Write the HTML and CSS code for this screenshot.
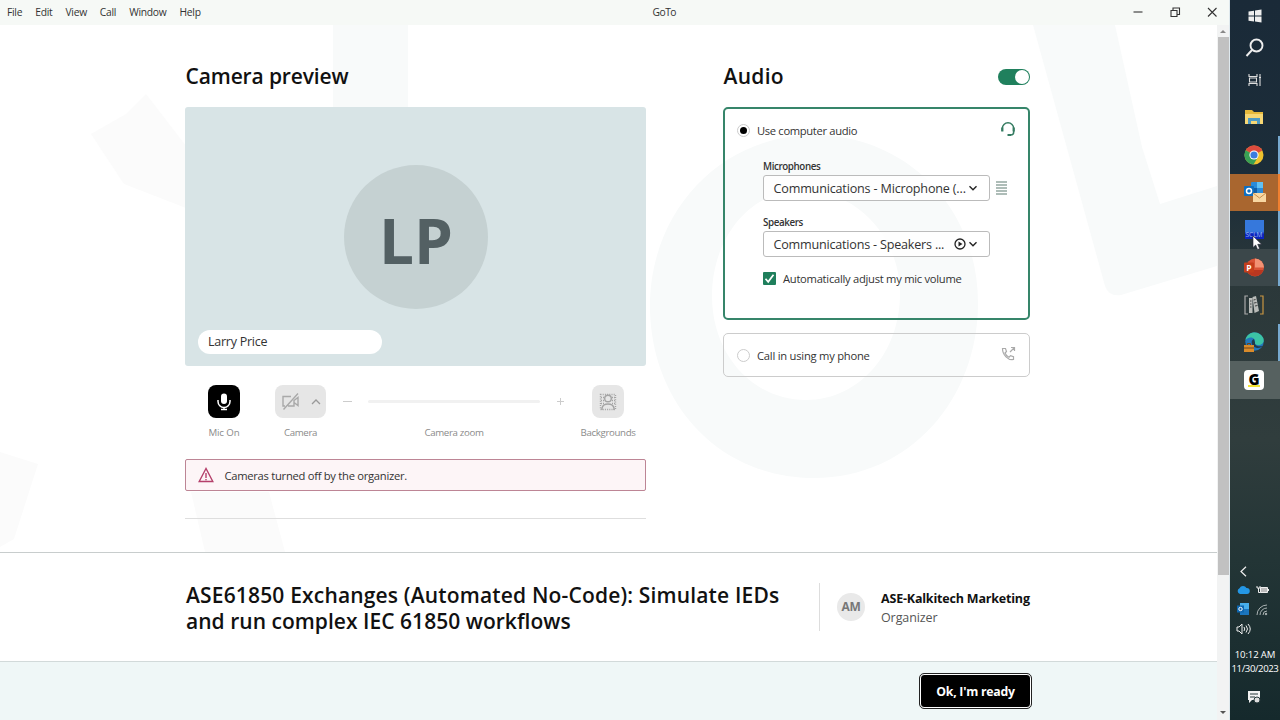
FILE: index.html
```html
<!DOCTYPE html>
<html lang="en">
  <head>
    <meta charset="UTF-8" />
    <meta name="viewport" content="width=device-width, initial-scale=1.0" />
    <title>GoTo</title>
    <link rel="stylesheet" href="styles.css">
  </head>
  <body>
    <div class="window">
      <header class="titlebar">
        <nav class="menu">
          <span>File</span>
          <span>Edit</span>
          <span>View</span>
          <span>Call</span>
          <span>Window</span>
          <span>Help</span>
        </nav>
        <span class="app-name">GoTo</span>
        <div class="controls">
          <svg width="12" height="12" viewBox="0 0 12 12"><path d="M1.500 6h9" /></svg>
          <svg width="12" height="12" viewBox="0 0 12 12"><path d="M2 4.500h6v6H2zM4 4.500v-2.500h6.500v6.500H8" /></svg>
          <svg width="12" height="12" viewBox="0 0 12 12"><path d="M2 2l8.500 8.500M10.500 2L2 10.500" /></svg>
        </div>
      </header>

      <div class="body">
        <div class="page">
          <main class="setup">
            <svg class="watermark" width="1217" height="527" viewBox="0 25 1217 527">
              <path d="M333 25h75v82h-75z" />
              <path fill-rule="evenodd" d="M814 135c92 0 164 72 164 168s-68 175-164 175-164-76-164-172 72-171 164-171zM802 190c-52 0-90 48-90 106s40 104 94 104 94-48 94-106-44-104-98-104z" />
              <path d="M1033 25h82l27 122 18 57 57-18v80l-96 29q-12 2-16-9z" />
              <path class="faint" d="M91 134l35-20 20-20 40 52v62l-62-24z" />
              <path class="faint" d="M0 452l38 12-24 75-14 8zM191 492h78l16 60h-80z" />
            </svg>

            <section class="camera">
              <h2>Camera preview</h2>
              <div class="preview">
                <div class="avatar">LP</div>
                <div class="name-tag">Larry Price</div>
              </div>
              <div class="tools">
                <div class="tool tool-mic">
                  <button class="tool-btn dark">
                    <svg width="20" height="20" viewBox="0 0 20 20"><rect x="7" y="1.500" width="6" height="10.500" rx="3" fill="#fff" /><path d="M4 8v1.500a6 6 0 0 0 12 0V8M10 15.500v2M7 17.500h6" fill="none" stroke="#fff" stroke-width="1.500" /></svg>
                  </button>
                  <span>Mic On</span>
                </div>
                <div class="tool tool-camera">
                  <button class="tool-btn wide">
                    <svg width="19" height="19" viewBox="0 0 19 19" fill="none" stroke="#a9a9a9" stroke-width="1.400"><path d="M10 4.500H2v9.500h2M13 8v6H7M13 8.500l4-3v8l-4-3M2.500 17.500L17 1.500" /></svg>
                    <svg width="10" height="10" viewBox="0 0 10 10" fill="none" stroke="#999" stroke-width="1.300"><path d="M1 7L5 3l4 4" /></svg>
                  </button>
                  <span>Camera</span>
                </div>
                <div class="tool tool-zoom">
                  <div class="slider">
                    <svg width="9" height="9" viewBox="0 0 9 9" stroke="#ccc"><path d="M0 4.500h9" /></svg>
                    <div class="track"></div>
                    <svg width="9" height="9" viewBox="0 0 9 9" stroke="#ccc"><path d="M1 4.500h7M4.500 1v7" /></svg>
                  </div>
                  <span>Camera zoom</span>
                </div>
                <div class="tool tool-backgrounds">
                  <button class="tool-btn">
                    <svg width="18" height="18" viewBox="0 0 18 18" fill="none" stroke="#a4a4a4" stroke-width="1.400"><path d="M1.500 1.500h15v15h-15z" stroke-dasharray="1 1.200" /><path d="M2 4.500h3M2 7.500h3M2 10.500h3M13 4.500h3M13 7.500h3M13 10.500h3" stroke-dasharray="1 1" /><circle cx="9" cy="5.500" r="3.300" /><path d="M3 17v-2q1-4 6-4t6 4v2" /></svg>
                  </button>
                  <span>Backgrounds</span>
                </div>
              </div>
              <div class="alert">
                <svg width="16" height="16" viewBox="0 0 16 16" fill="none" stroke="#b5406b" stroke-width="1.400"><path d="M8 1.500L1.200 14.500h13.600zM8 6v5M8 12v1.200" /></svg>
                <span>Cameras turned off by the organizer.</span>
              </div>
              <hr />
            </section>

            <section class="audio">
              <div class="audio-head">
                <h2>Audio</h2>
                <div class="toggle"></div>
              </div>
              <div class="option selected">
                <div class="option-head">
                  <i class="radio checked"></i>
                  <span>Use computer audio</span>
                  <svg width="16" height="16" viewBox="0 0 16 16" fill="none" stroke="#367c62" stroke-width="1.500"><path d="M2.300 10V7.500a5.700 5.700 0 0 1 11.400 0V11q0 3-3 3" /><path d="M2.300 6.500v4M13.700 6.500v4" stroke-width="2.200" /><path d="M7.500 14h3.500" stroke-width="2" /></svg>
                </div>
                <div class="devices">
                  <label>Microphones</label>
                  <div class="device-row">
                    <div class="select">
                      <span class="mic-device">Communications - Microphone (...</span>
                      <svg width="10" height="10" viewBox="0 0 10 10" fill="none" stroke="#222" stroke-width="1.400"><path d="M1.500 3.300L5 6.700l3.500-3.400" /></svg>
                    </div>
                    <div class="level"></div>
                  </div>
                  <label>Speakers</label>
                  <div class="device-row">
                    <div class="select">
                      <span class="speaker-device">Communications - Speakers ...</span>
                      <svg class="play" width="12" height="12" viewBox="0 0 12 12"><circle cx="6" cy="6" r="5" fill="none" stroke="#222" stroke-width="1.300" /><path d="M4.500 3.500L8.500 6l-4 2.500z" fill="#222" /></svg>
                      <svg width="10" height="10" viewBox="0 0 10 10" fill="none" stroke="#222" stroke-width="1.400"><path d="M1.500 3.300L5 6.700l3.500-3.400" /></svg>
                    </div>
                  </div>
                  <div class="check-row">
                    <svg width="13" height="13" viewBox="0 0 13 13"><rect width="13" height="13" rx="1" fill="#1f7f5c" /><path d="M2.500 6.800l2.700 3 5.300-7" fill="none" stroke="#fff" stroke-width="1.700" /></svg>
                    <span>Automatically adjust my mic volume</span>
                  </div>
                </div>
              </div>
              <div class="option">
                <div class="option-head">
                  <i class="radio"></i>
                  <span class="phone-label">Call in using my phone</span>
                  <svg width="15" height="15" viewBox="0 0 15 15" fill="none" stroke="#aaa" stroke-width="1.200"><path d="M1.500 2.500h3l1 3-1.500 1.500q1.200 3 4 4.200l1.500-1.500 3 1v2.800q-4 .8-7.500-2.700T1.500 2.500zM9 6l4.500-4.500M10 1.500h3.500V5" /></svg>
                </div>
              </div>
            </section>
          </main>

          <section class="meeting">
            <h1>ASE61850 Exchanges (Automated No-Code): Simulate IEDs<br><span>and run complex IEC 61850 workflows</span></h1>
            <div class="organizer">
              <div class="initials">AM</div>
              <div class="organizer-name">
                <b>ASE-Kalkitech Marketing</b>
                <p>Organizer</p>
              </div>
            </div>
          </section>

          <footer class="footer">
            <button class="ready">Ok, I'm ready</button>
          </footer>
        </div>

        <div class="scrollbar">
          <i class="arrow up"></i>
          <div class="thumb"></div>
          <i class="arrow down"></i>
        </div>
      </div>
    </div>

    <aside class="taskbar">
      <div class="sys">
        <svg width="14" height="14" viewBox="0 0 14 14" fill="#eee"><path d="M.5 2.500L6 1.700v4.900H.5zM7 1.500l6.500-1v6.100H7zM.5 7.500H6v5L.5 11.700zM7 7.500h6.500v6L7 12.600z" /></svg>
      </div>
      <div class="sys">
        <svg width="20" height="20" viewBox="0 0 20 20" fill="none" stroke="#eee" stroke-width="1.900"><circle cx="11.500" cy="7.500" r="6" /><path d="M7 12l-5.500 6" /></svg>
      </div>
      <div class="sys">
        <svg width="14" height="14" viewBox="0 0 14 14" fill="none" stroke="#ddd" stroke-width="1.100"><path d="M1 1v2.500h8V1M1 13v-2.500h8V13M1.500 5h7v4h-7zM12 1v12M11 4.500h2" /></svg>
      </div>
      <div class="task">
        <svg width="20" height="18" viewBox="0 0 20 18"><path d="M1 2h7l2 2h9v12H1z" fill="#e6b93c" /><path d="M1 6h18v10H1z" fill="#f7d774" /><path d="M4 10h12v6h-3v-3H7v3H4z" fill="#4e9ac4" /></svg>
      </div>
      <div class="task open">
        <svg width="20" height="20" viewBox="0 0 20 20"><circle cx="10" cy="10" r="9.500" fill="#f0c22e" /><path d="M10 10L1.700 5.200A9.500 9.500 0 0 1 18.300 5.500z" fill="#dd4b3e" /><path d="M10 10L1.700 5.200A9.500 9.500 0 0 0 9.500 19.500L14 12z" fill="#39a055" /><circle cx="10" cy="10" r="4.600" fill="#fff" /><circle cx="10" cy="10" r="3.600" fill="#3b7de0" /></svg>
      </div>
      <div class="task alerting">
        <svg width="22" height="20" viewBox="0 0 22 20"><rect x="7" y="0" width="12" height="12" rx="1" fill="#2b8bd9" /><path d="M13 0h6v6h-6z" fill="#61c0f2" /><path d="M7 6h6v6H7z" fill="#145ea5" /><rect x="0" y="4" width="10" height="10" rx="1" fill="#0f6fc1" /><circle cx="5" cy="9" r="2.500" fill="none" stroke="#fff" stroke-width="1.500" /><rect x="9" y="11" width="13" height="9" fill="#f8d7a2" /><path d="M9 11l6.500 5 6.500-5" fill="none" stroke="#c98e4c" /></svg>
      </div>
      <div class="task open">
        <div class="scl">SCLM</div>
        <svg class="cursor" width="11" height="16" viewBox="0 0 11 16"><path d="M1 1v11.500l2.700-2.500 1.900 4.500 2-.9-1.900-4.300h3.900z" fill="#fff" stroke="#223" stroke-width=".6" /></svg>
      </div>
      <div class="task open lit">
        <svg width="20" height="19" viewBox="0 0 20 19"><circle cx="11" cy="9.500" r="9" fill="#d95336" /><path d="M11 .5a9 9 0 0 1 9 9h-9z" fill="#f29274" /><path d="M2.500 12h17a9 9 0 0 1-17 0z" fill="#b93720" /><rect x="0" y="4.500" width="10" height="10" rx="1" fill="#c43e1c" /><text x="2.300" y="12.500" class="ppt-letter">P</text></svg>
      </div>
      <div class="task">
        <svg width="20" height="20" viewBox="0 0 20 20"><path d="M4 1H1v18h3" fill="none" stroke="#aaa" stroke-width="1.200" /><path d="M16 1h3v18h-3" fill="none" stroke="#c99642" stroke-width="1.200" /><path d="M5 3h3.500v15H5zM8.500 2l3.500-1 3 15-4.500 2z" fill="#b9bbb8" /><path d="M6 6h1.500M6 9h1.500M6 12h1.500M9.500 5l2-.5M10 8l2.500-.5M11 11l2.500-.5" stroke="#444" /></svg>
      </div>
      <div class="task open">
        <svg width="20" height="20" viewBox="0 0 20 20"><circle cx="10.500" cy="9.500" r="9.300" fill="#2377bb" /><path d="M1.500 8C3-1.500 16-2 19.300 6c1.700 5-2.300 8-6.800 6.800-3-.8-.5-3-2-5.300C8.500 4.500 4 5 1.500 8z" fill="#3cc3a5" /><path d="M10 7c-4 1-3 8 3 9 3 .3 5-1 5.500-2-3 1-8 0-7.500-3.500z" fill="#20394d" /><rect x="0" y="13" width="10" height="7" fill="#d98b2b" /><path d="M3.500 13v-1.500h3V13M0 16h10" fill="none" stroke="#70451a" /></svg>
      </div>
      <div class="task active">
        <div class="goto"><span>G</span></div>
      </div>

      <div class="tray">
        <svg width="7" height="11" viewBox="0 0 7 11" fill="none" stroke="#eee" stroke-width="1.200"><path d="M6 .8L1 5.500l5 4.700" /></svg>
        <div class="tray-row">
          <svg width="13" height="9" viewBox="0 0 13 9"><path d="M3 9a3 3 0 0 1-.5-5.700A4 4 0 0 1 9.500 3 3 3 0 0 1 10 9z" fill="#2497e5" /></svg>
          <svg width="13" height="9" viewBox="0 0 13 9"><path d="M4.500 2.500h7v5h-7z" fill="#bbb" stroke="#eee" /><path d="M12.500 4v2M1 1v2h3V1M2.500 3v4.500h2" fill="none" stroke="#eee" /></svg>
        </div>
        <div class="tray-row">
          <svg width="13" height="13" viewBox="0 0 13 13"><rect x="3" width="9" height="12" fill="#48aeea" /><path d="M3 6h9v6H3z" fill="#1b75bd" /><rect y="2.500" width="7" height="7" fill="#0d66b0" /><circle cx="3.500" cy="6" r="1.700" fill="none" stroke="#fff" /></svg>
          <svg width="12" height="12" viewBox="0 0 12 12" fill="none" stroke="#aab2b2"><path d="M1 11A10 10 0 0 1 11 1M4 11a7 7 0 0 1 7-7M7 11a4 4 0 0 1 4-4" /><circle cx="10" cy="10" r=".8" fill="#eee" /></svg>
        </div>
        <svg class="volume" width="15" height="12" viewBox="0 0 15 12" fill="none" stroke="#eee"><path d="M1 4h2l3-3v10L3 8H1zM8 4q1.500 2 0 4M10 2.500q3 3.500 0 7M12 1q4.500 5 0 10" /></svg>
        <div class="clock">10:12 AM<br><span>11/30/2023</span></div>
        <svg class="notify" width="14" height="14" viewBox="0 0 14 14"><path d="M1 1h12v9H5l-3 3v-3H1z" fill="#f2f2f2" /><path d="M3 4h8M3 7h5" stroke="#26393b" /><circle cx="10" cy="10" r="3" fill="#ddd" stroke="#26393b" /></svg>
      </div>
    </aside>
  </body>
</html>
```
FILE: styles.css
```css
* {
  box-sizing: border-box;
}

body {
  display: flex;
  width: 1280px;
  height: 720px;
  margin: 0;
  overflow: hidden;
  font-family: "Open Sans", "Noto Sans", sans-serif;
  color: #111;
  background-color: #fff;
}

h1,
h2,
p {
  margin: 0;
}

svg {
  display: block;
  flex: none;
}

button {
  font-family: inherit;
  border: none;
  padding: 0;
}

/* window */
.window {
  display: flex;
  flex-direction: column;
  width: 1230px;
  border-right: 1px solid #dfe9ee;
}

.titlebar {
  display: grid;
  grid-template-columns: 1fr auto 1fr;
  align-items: center;
  height: 25px;
  padding: 0 11.5px 1px 7px;
  background-color: #f6f9f6;
  font-size: 10.3px;
  letter-spacing: -0.27px;
  color: #333;
}

.app-name {
  position: relative;
  left: 52px;
  letter-spacing: -0.5px;
}

.menu {
  display: flex;
  gap: 13px;
}

.controls {
  display: flex;
  justify-content: flex-end;
  gap: 25px;
}

.controls svg {
  fill: none;
  stroke: #333;
  stroke-width: 1.1;
}

.body {
  display: flex;
  flex: 1;
  min-height: 0;
}

.page {
  display: flex;
  flex-direction: column;
  width: 1217px;
}

/* audio and camera setup */
.setup {
  position: relative;
  display: flex;
  gap: 77px;
  height: 527px;
  padding: 37px 0 0 185px;
}

.watermark {
  position: absolute;
  top: 0;
  left: 0;
  fill: #f8fafa;
}

.watermark .faint {
  fill: #fbfbfb;
}

.setup h2 {
  font-size: 21px;
  line-height: 29px;
  font-weight: 600;
  letter-spacing: -0.13px;
}

.setup .camera h2 {
  padding-left: 0.5px;
}

.setup .audio h2 {
  padding-left: 0.5px;
  letter-spacing: 0.3px;
}

.camera {
  position: relative;
  width: 461px;
}

.preview {
  display: flex;
  flex-direction: column;
  align-items: center;
  height: 259px;
  margin-top: 16px;
  padding: 58px 12px 12px 13px;
  border-radius: 3px;
  background-color: #d8e4e6;
}

.avatar {
  width: 144px;
  height: 144px;
  border-radius: 50%;
  background-color: #c5d1d2;
  color: #536063;
  font-size: 62px;
  font-weight: 700;
  line-height: 151px;
  text-align: center;
}

.name-tag {
  align-self: flex-start;
  width: 184px;
  height: 24px;
  margin-top: 21px;
  padding-left: 10px;
  border-radius: 12px;
  background-color: #fff;
  font-size: 12.5px;
  line-height: 24px;
  letter-spacing: -0.25px;
  color: #333;
}

.tools {
  display: flex;
  height: 74px;
  margin-top: 19px;
  padding-left: 9px;
}

.tool {
  display: flex;
  flex: none;
  flex-direction: column;
  align-items: center;
  gap: 8px;
  font-size: 9.7px;
  line-height: 14px;
  letter-spacing: -0.35px;
  color: #8b8b8b;
}

.tool-mic {
  width: 60px;
  letter-spacing: -0.1px;
}

.tool-camera {
  width: 93px;
}

.tool-zoom {
  width: 214px;
}

.tool-backgrounds {
  width: 94px;
}

.tool-btn {
  display: flex;
  align-items: center;
  justify-content: center;
  width: 32px;
  height: 33px;
  border-radius: 8px;
  background-color: #e6e6e6;
}

.tool-btn.dark {
  background-color: #000;
}

.tool-btn.wide {
  width: 51px;
  gap: 11px;
}

.slider {
  display: flex;
  align-items: center;
  justify-content: space-between;
  width: 222px;
  height: 33px;
}

.track {
  width: 172px;
  height: 3px;
  border-radius: 2px;
  background-color: #f1f1f1;
}

.alert {
  display: flex;
  align-items: center;
  gap: 11px;
  height: 32px;
  padding-left: 11.5px;
  border: 1px solid #bd8595;
  border-radius: 2px;
  background-color: #fdf5f7;
  font-size: 11.2px;
  letter-spacing: -0.27px;
  color: #333;
}

hr {
  height: 1px;
  margin: 27px 0 0;
  border: none;
  background-color: #dedede;
}

.audio {
  position: relative;
  width: 307px;
}

.audio-head {
  display: flex;
  align-items: center;
  justify-content: space-between;
  margin-bottom: 16px;
}

.toggle {
  display: flex;
  justify-content: flex-end;
  width: 32px;
  height: 16px;
  margin-top: 1px;
  padding: 1px;
  border-radius: 8px;
  background-color: #20805d;
}

.toggle::after {
  content: "";
  width: 14px;
  height: 14px;
  border-radius: 50%;
  background-color: #fff;
}

.option {
  height: 44px;
  padding: 13px 13px;
  border: 1px solid #ccc;
  border-radius: 5px;
}

.option.selected {
  height: 213px;
  margin-bottom: 13px;
  padding: 13px 12px;
  border: 2px solid #36856a;
}

.option-head {
  display: flex;
  align-items: center;
  height: 16px;
  font-size: 11.2px;
  letter-spacing: -0.33px;
  color: #333;
}

.option-head svg {
  margin: -3px 0 0 auto;
}

.phone-label {
  letter-spacing: -0.23px;
}

.radio {
  width: 13px;
  height: 13px;
  margin-right: 7px;
  border: 1px solid #ccc;
  border-radius: 50%;
  background-color: #fff;
}

.radio.checked {
  padding: 2px;
}

.radio.checked::after {
  content: "";
  display: block;
  width: 7px;
  height: 7px;
  border-radius: 50%;
  background-color: #000;
}

.devices {
  padding: 20px 0 0 26px;
}

.devices label {
  display: block;
  height: 17px;
  font-size: 9.8px;
  font-weight: 600;
  line-height: 18px;
  letter-spacing: -0.4px;
  color: #333;
}

.device-row {
  display: flex;
  align-items: center;
  gap: 6px;
  height: 26px;
  margin-bottom: 13px;
}

.select {
  display: flex;
  align-items: center;
  width: 227px;
  height: 26px;
  padding: 0 11px 0 9.5px;
  border: 1px solid #bbb;
  border-radius: 3px;
  background-color: rgba(255, 255, 255, 0.8);
  font-size: 12.6px;
  letter-spacing: -0.18px;
  color: #333;
  white-space: nowrap;
}

.speaker-device {
  letter-spacing: -0.21px;
}

.select svg:last-child {
  margin-left: auto;
}

.select .play {
  margin: 0 0 0 auto;
}

.select .play + svg {
  margin-left: 2px;
}

.level {
  width: 11px;
  height: 15px;
  background: repeating-linear-gradient(#aebdb8 0 2px, #fff 2px 3px);
}

.check-row {
  display: flex;
  align-items: center;
  gap: 7px;
  height: 16px;
  font-size: 11.2px;
  letter-spacing: -0.27px;
  color: #333;
}

/* meeting details */
.meeting {
  display: flex;
  height: 110px;
  padding: 29px 0 0 186px;
  border-top: 1px solid #c8cdcd;
  border-bottom: 1px solid #d2dada;
}

.meeting h1 {
  width: 633px;
  font-size: 21px;
  font-weight: 600;
  line-height: 26px;
  letter-spacing: 0.17px;
  white-space: nowrap;
}

.meeting h1 span {
  letter-spacing: 0.03px;
}

.organizer {
  display: flex;
  align-items: center;
  gap: 16px;
  height: 48px;
  margin-top: 1px;
  padding-left: 17px;
  border-left: 1px solid #ddd;
  font-size: 12.5px;
  line-height: 19px;
  letter-spacing: -0.19px;
  white-space: nowrap;
}

.organizer-name {
  padding-top: 2px;
}

.organizer p {
  color: #555;
  letter-spacing: -0.1px;
}

.initials {
  width: 28px;
  height: 28px;
  border-radius: 50%;
  background-color: #e9e9e9;
  color: #777;
  font-size: 12px;
  font-weight: 700;
  line-height: 28px;
  letter-spacing: -0.3px;
  text-align: center;
}

.footer {
  flex: 1;
  padding: 12px 0 0 920px;
  background-color: #eff7f7;
}

.ready {
  width: 111px;
  height: 34px;
  border: 1px solid #fff;
  border-radius: 4px;
  outline: 1px solid #222;
  background-color: #000;
  color: #fff;
  font-size: 12.3px;
  font-weight: 700;
  letter-spacing: -0.25px;
}

/* scrollbar */
.scrollbar {
  display: flex;
  flex-direction: column;
  align-items: center;
  width: 12px;
  background-color: #f2f3f3;
}

.thumb {
  width: 11px;
  height: 538px;
  background-color: #c1c1c1;
}

.arrow {
  width: 0;
  height: 0;
  border: 3px solid transparent;
}

.arrow.up {
  margin: 2px 0 4px;
  border-bottom-color: #888;
}

.arrow.down {
  margin: auto 0 3px;
  border-top-color: #555;
}

/* taskbar */
.taskbar {
  display: flex;
  flex-direction: column;
  width: 50px;
  background: linear-gradient(#1a2a38 0, #1c2d39 190px, #2b383a 280px, #303d3d 440px, #233536 560px, #15292c 720px);
}

.sys,
.task {
  display: flex;
  align-items: center;
  justify-content: center;
  height: 32px;
  padding-right: 2px;
}

.sys {
  padding-right: 1px;
}

.task {
  position: relative;
  height: 37.5px;
}

.sys:nth-child(3) {
  height: 34.5px;
  padding-bottom: 2px;
}

.open {
  box-shadow: inset -2px 0 #77a9cf;
}

.lit {
  background-color: #3b474a;
}

.active {
  background-color: #566160;
}

.alerting {
  padding-right: 0;
  background-color: #a9662f;
  box-shadow: inset -2px 0 #f08030;
}

.scl {
  width: 19px;
  height: 19px;
  overflow: hidden;
  background: linear-gradient(#3678dc 60%, #0c24bd 75%);
  color: #9ab8f5;
  font-size: 6.5px;
  line-height: 29px;
  text-align: center;
}

/* mouse pointer resting over the icon */
.cursor {
  position: absolute;
  top: 24px;
  left: 22px;
  z-index: 1;
}

.ppt-letter {
  fill: #fff;
  font-size: 8.5px;
  font-weight: 700;
}

.goto {
  width: 20px;
  height: 20px;
  border-radius: 4px;
  background-color: #fff;
  color: #000;
  font-size: 15px;
  font-weight: 800;
  line-height: 18px;
  text-align: center;
}

.goto span {
  display: block;
  width: 12px;
  height: 17px;
  margin: 0 auto;
  border-bottom: 2px solid #f5e534;
}

.tray {
  display: flex;
  flex-direction: column;
  flex: 1;
  margin-top: 167px;
  padding-left: 7px;
  color: #fff;
}

.tray > svg:first-child {
  margin-left: 3px;
}

.tray-row {
  display: flex;
  align-items: center;
  gap: 6px;
  height: 20px;
}

.tray-row:nth-child(2) {
  margin-top: 3px;
}

.volume {
  margin: 3px 0 0 -1px;
}

.clock {
  width: 50px;
  margin: 13px 0 0 -7px;
  font-size: 9.6px;
  line-height: 14px;
  letter-spacing: -0.15px;
  text-align: center;
}

.clock span {
  letter-spacing: -0.4px;
}

.notify {
  margin: 14px 0 0 10px;
}
```
